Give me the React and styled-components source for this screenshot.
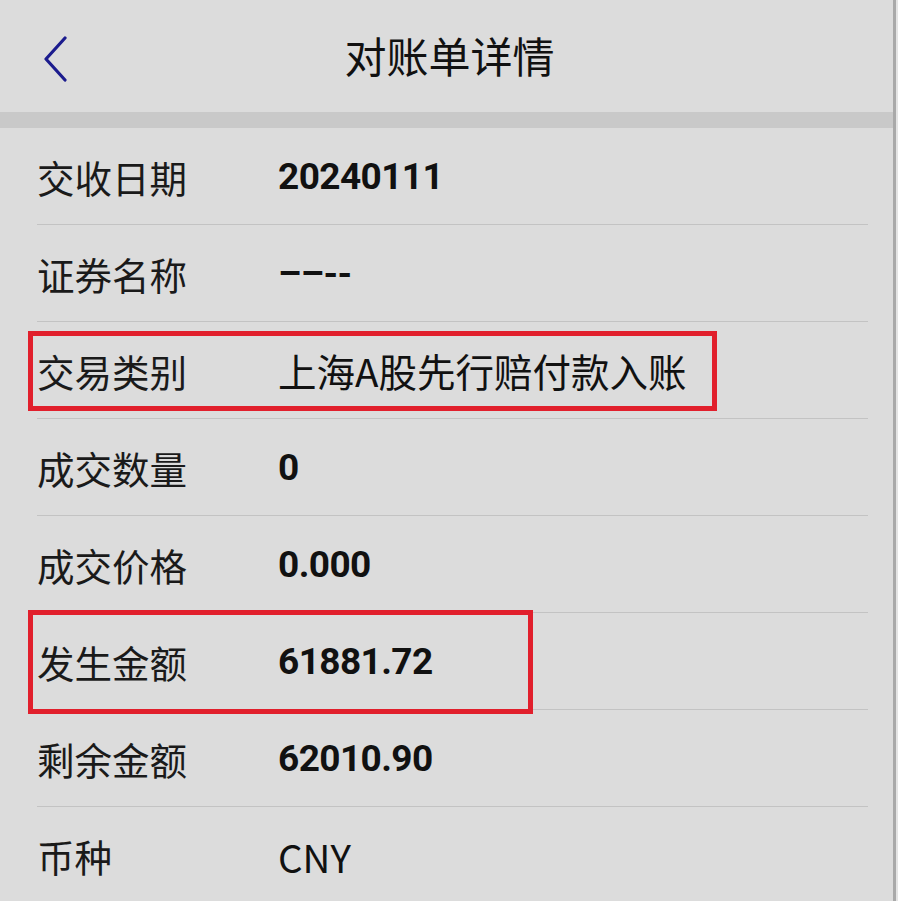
import React from "react";
import styled, { createGlobalStyle } from "styled-components";

const Global = createGlobalStyle`
  html, body { margin: 0; padding: 0; background: #e4e4e4; }
  body { font-family: "Noto Sans CJK SC", "Noto Sans", sans-serif; }
`;

const Page = styled.div`
  width: 893px;
  height: 901px;
  background: #dcdcdc;
  border-right: 3px solid #a9a9a9;
  overflow: hidden;
  display: flex;
  flex-direction: column;
`;

const Header = styled.header`
  height: 112px;
  display: flex;
  align-items: center;
  justify-content: center;
  position: relative;
  flex-shrink: 0;
`;

const Back = styled.button`
  position: absolute;
  left: 36px;
  top: 36px;
  width: 40px;
  height: 46px;
  border: 0;
  padding: 0;
  background: transparent;
  display: flex;
  align-items: center;
  justify-content: center;
`;

const Title = styled.h1`
  margin: 0;
  font-size: 42px;
  font-weight: 400;
  color: #111;
  margin-left: 6px;
  margin-top: -4px;
`;

const Band = styled.div`
  height: 16px;
  background: #c9c9c9;
  flex-shrink: 0;
`;

const List = styled.div`
  padding: 0 25px 0 37px;
  display: flex;
  flex-direction: column;
`;

const Row = styled.div`
  height: 97px;
  box-sizing: border-box;
  display: flex;
  align-items: center;
  border-bottom: ${(p) => (p.$last ? "none" : "1px solid #c3c3c3")};
  position: relative;
`;

const Highlight = styled.div`
  position: absolute;
  left: -9px;
  top: ${(p) => p.$top}px;
  bottom: ${(p) => p.$bottom}px;
  width: ${(p) => p.$w}px;
  border: 5px solid #e11f2c;
  box-sizing: border-box;
  pointer-events: none;
`;

const Label = styled.span`
  width: 241px;
  flex-shrink: 0;
  font-size: 37.5px;
  color: #1a1a1a;
  font-weight: 400;
`;

const Value = styled.span`
  font-size: ${(p) => (p.$bold ? "37px" : "38.5px")};
  font-weight: ${(p) => (p.$bold ? 700 : 400)};
  font-family: ${(p) =>
    p.$bold ? '"Roboto", "Noto Sans", sans-serif' : '"Noto Sans CJK SC", "Noto Sans", sans-serif'};
  color: #111;
  letter-spacing: ${(p) => (p.$bold ? "-0.6px" : "0")};
`;

const rows = [
  { label: "交收日期", value: "20240111", bold: true },
  { label: "证券名称", value: "––--", bold: true },
  { label: "交易类别", value: "上海A股先行赔付款入账", hl: { top: 9, bottom: 7, w: 689 } },
  { label: "成交数量", value: "0", bold: true },
  { label: "成交价格", value: "0.000", bold: true },
  { label: "发生金额", value: "61881.72", bold: true, hl: { top: -3, bottom: -5, w: 505 } },
  { label: "剩余金额", value: "62010.90", bold: true },
  { label: "币种", value: "CNY" },
];

export default function App() {
  return (
    <>
      <Global />
      <Page>
        <Header>
          <Back aria-label="back">
            <svg width="28" height="46" viewBox="0 0 28 46">
              <path d="M23 2 L4 23 L23 44" fill="none" stroke="#1c1c8e" strokeWidth="3.2" strokeLinecap="round" strokeLinejoin="round" />
            </svg>
          </Back>
          <Title>对账单详情</Title>
        </Header>
        <Band />
        <List>
          {rows.map((r, i) => (
            <Row key={r.label} $last={i === rows.length - 1}>
              {r.hl && <Highlight $top={r.hl.top} $bottom={r.hl.bottom} $w={r.hl.w} />}
              <Label>{r.label}</Label>
              <Value $bold={r.bold}>{r.value}</Value>
            </Row>
          ))}
        </List>
      </Page>
    </>
  );
}
